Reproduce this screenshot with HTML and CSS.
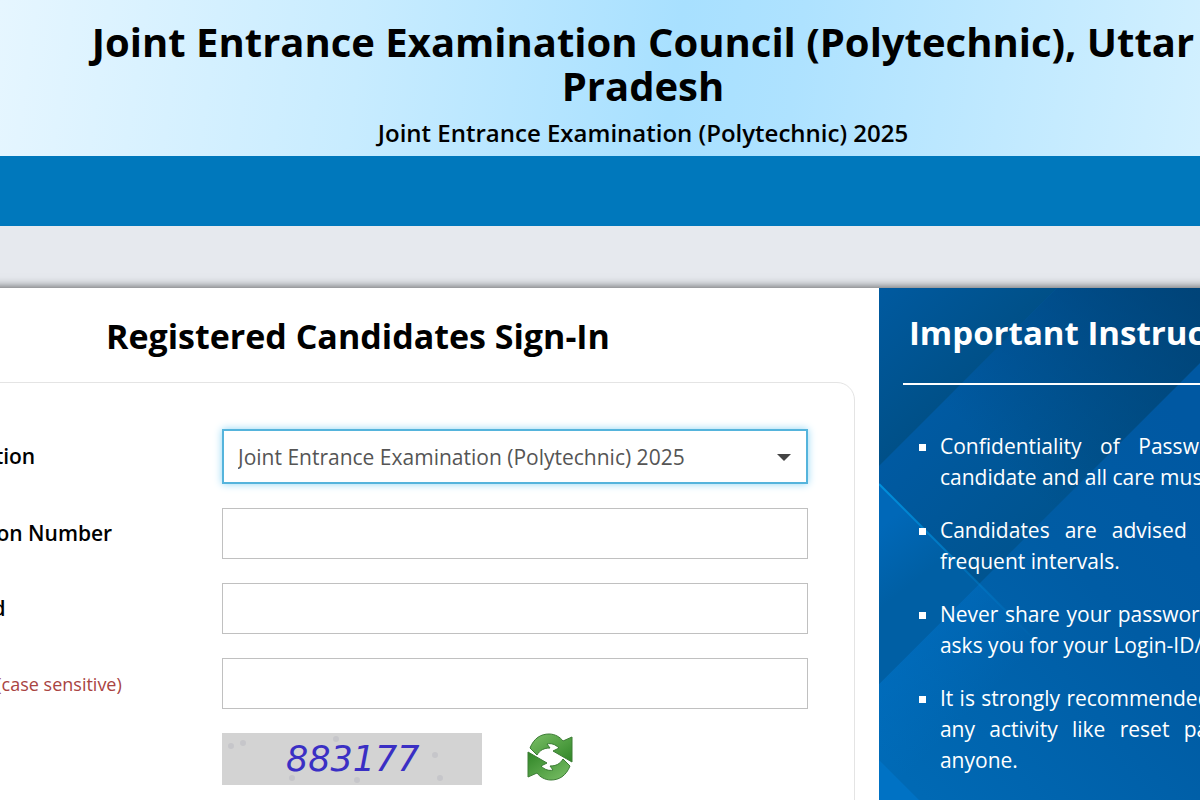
FILE: index.html
```html
<!DOCTYPE html>
<html lang="en">
<head>
    <meta charset="UTF-8">
    <meta name="viewport" content="width=device-width, initial-scale=1.0">
    <title>Joint Entrance Examination Council (Polytechnic), Uttar Pradesh</title>
    <link rel="stylesheet" href="styles.css">
</head>
<body>
    <header class="header">
        <h1>Joint Entrance Examination Council (Polytechnic), Uttar Pradesh</h1>
        <p>Joint Entrance Examination (Polytechnic) 2025</p>
    </header>
    <nav class="navbar"></nav>

    <main class="main">
        <section class="signin">
            <h2>Registered Candidates Sign-In</h2>
            <form class="card">
                <label for="exam">Examination</label>
                <div class="select-box">
                    <select id="exam">
                        <option>Joint Entrance Examination (Polytechnic) 2025</option>
                    </select>
                </div>

                <label for="appNo">Application Number</label>
                <input type="text" id="appNo">

                <label for="password">Password</label>
                <input type="password" id="password">

                <label for="captcha">Captcha <small>(case sensitive)</small></label>
                <input type="text" id="captcha">

                <div class="captcha-row">
                    <svg class="captcha" viewBox="0 0 260 52" role="img" aria-label="Captcha">
                        <rect width="260" height="52" fill="#d3d3d3"/>
                        <g fill="#c6c6ca">
                            <circle cx="9" cy="13" r="3"/>
                            <circle cx="21" cy="10" r="3"/>
                            <circle cx="114" cy="6" r="3"/>
                            <circle cx="213" cy="22" r="3"/>
                            <circle cx="70" cy="45" r="3"/>
                            <circle cx="135" cy="47" r="3"/>
                            <circle cx="218" cy="45" r="3"/>
                        </g>
                        <text x="64" y="38">883177</text>
                    </svg>
                    <button type="button" class="refresh" aria-label="Refresh">
                        <svg viewBox="0 0 48 48">
                            <defs>
                                <linearGradient id="green" x1="0" y1="0" x2="1" y2="1">
                                    <stop offset="0" stop-color="#7cc068"/>
                                    <stop offset="1" stop-color="#2f8526"/>
                                </linearGradient>
                            </defs>
                            <g fill="url(#green)" stroke="#3c7c35" stroke-width="1">
                                <path id="arrow" d="M4 15C8 5 15 1 23 1c6 0 11 3 14 7l9-4v25L27 18l6-3c-4-4-8-5-12-4l3 4c-6 0-10 2-13 7z"/>
                                <use href="#arrow" transform="rotate(180 24 24)"/>
                            </g>
                        </svg>
                    </button>
                </div>
            </form>
        </section>

        <aside class="instructions">
            <svg class="backdrop" aria-hidden="true">
                <defs>
                    <linearGradient id="base" gradientUnits="userSpaceOnUse" x1="0" y1="460" x2="330" y2="160">
                        <stop offset="0" stop-color="#0069b4"/>
                        <stop offset="0.6" stop-color="#005ca4"/>
                        <stop offset="1" stop-color="#0058a2"/>
                    </linearGradient>
                    <linearGradient id="band1" gradientUnits="userSpaceOnUse" x1="0" y1="0" x2="89" y2="89">
                        <stop offset="0" stop-color="#005aa0"/>
                        <stop offset="1" stop-color="#005088"/>
                    </linearGradient>
                    <linearGradient id="band2" gradientUnits="userSpaceOnUse" x1="89" y1="89" x2="198" y2="198">
                        <stop offset="0" stop-color="#005aa2"/>
                        <stop offset="1" stop-color="#005490"/>
                    </linearGradient>
                    <linearGradient id="shade" gradientUnits="userSpaceOnUse" x1="150" y1="200" x2="330" y2="20">
                        <stop offset="0" stop-color="#003c6c" stop-opacity="0"/>
                        <stop offset="1" stop-color="#003c6c" stop-opacity="0.7"/>
                    </linearGradient>
                    <linearGradient id="wedge" gradientUnits="userSpaceOnUse" x1="0" y1="240" x2="40" y2="290">
                        <stop offset="0" stop-color="#0068b8"/>
                        <stop offset="1" stop-color="#005fa4"/>
                    </linearGradient>
                    <linearGradient id="glow" gradientUnits="userSpaceOnUse" x1="50" y1="345" x2="110" y2="405">
                        <stop offset="0" stop-color="#0072c8" stop-opacity="0.4"/>
                        <stop offset="1" stop-color="#0072c8" stop-opacity="0"/>
                    </linearGradient>
                    <linearGradient id="ray" gradientUnits="userSpaceOnUse" x1="0" y1="196" x2="160" y2="356">
                        <stop offset="0" stop-color="#0090dc"/>
                        <stop offset="1" stop-color="#0080d0" stop-opacity="0"/>
                    </linearGradient>
                </defs>
                <rect width="100%" height="100%" fill="url(#base)"/>
                <path d="M178 0H396L0 396V178z" fill="url(#band2)"/>
                <path d="M178 0H396L100 296 0 196V178z" fill="url(#shade)"/>
                <path d="M0 0H178L0 178z" fill="url(#band1)"/>
                <path d="M0 196L100 296 0 396z" fill="url(#wedge)"/>
                <path d="M100 296L240 436 0 676V396z" fill="url(#glow)"/>
                <path d="M0 472L90 562H0z" fill="#0072c4"/>
                <path d="M0 196L160 356" stroke="url(#ray)" stroke-width="2"/>
            </svg>
            <h2>Important Instructions</h2>
            <ul>
                <li>Confidentiality of Password is solely responsibility of the candidate and all care must be taken to protect the password.</li>
                <li>Candidates are advised to keep changing the Password at frequent intervals.</li>
                <li>Never share your password and do not respond to any mail that asks you for your Login-ID/Password.</li>
                <li>It is strongly recommended never to share the OTPs received for any activity like reset password, registration form etc. with anyone.</li>
            </ul>
        </aside>
    </main>
</body>
</html>
```

FILE: styles.css
```css
* {
    box-sizing: border-box;
}
body {
    margin: 0;
    background-color: #e6e9ee;
    color: #000;
    font-family: "Open Sans", sans-serif;
    font-size: 21px;
    overflow: hidden;
}
.header {
    padding: 20px 0 6px 86px;
    text-align: center;
    background: linear-gradient(98deg, #e6f6ff 0%, #c8ecff 30%, #a8e0ff 56%, #aee2ff 66%, #d2f0ff 100%);
}
.header h1 {
    margin: 0;
    font-size: 40px;
    font-weight: 700;
    line-height: 44px;
}
.header p {
    margin: 8px 0 0;
    font-size: 24px;
    font-weight: 600;
    line-height: 34px;
}
.navbar {
    height: 70px;
    background-color: #0078bc;
}
.main {
    display: grid;
    grid-template-columns: 59fr 41fr;
    margin: 62px -403px 0 -163px;
    background-color: #fff;
    box-shadow: 0 0 10px rgba(0, 0, 0, 0.7);
}
.signin {
    padding: 24px;
}
.signin h2 {
    margin: 0 0 22px;
    font-size: 34px;
    font-weight: 700;
    line-height: 48px;
    text-align: center;
}
.card {
    display: grid;
    grid-template-columns: 314px 1fr;
    row-gap: 24px;
    align-items: center;
    padding: 46px;
    border: 1px solid #e4e4e4;
    border-radius: 18px;
}
label {
    padding-bottom: 2px;
    font-weight: 600;
}
label small {
    color: #a94442;
    font-size: 18px;
    font-weight: 400;
}
input,
select {
    display: block;
    width: 100%;
    height: 51px;
    padding: 0 14px;
    border: 1px solid #c0c0c0;
    border-radius: 0;
    background-color: #fff;
    color: #555;
    font: inherit;
}
.select-box {
    position: relative;
}
.select-box::after {
    content: "";
    position: absolute;
    top: 25px;
    right: 17px;
    border: 7px solid transparent;
    border-top-color: #444;
    border-bottom: 0;
    pointer-events: none;
}
select {
    appearance: none;
    height: 55px;
    border: 2px solid #55b4dc;
    box-shadow: 0 0 8px #8fd6f5;
}
.captcha-row {
    display: flex;
    grid-column: 2;
    align-items: flex-start;
    gap: 44px;
}
.captcha {
    width: 260px;
}
.captcha text {
    fill: #3a2fc4;
    font: oblique 35px "DejaVu Sans", sans-serif;
}
.refresh {
    width: 48px;
    height: 48px;
    padding: 0;
    border: none;
    background: none;
    cursor: pointer;
}
.instructions {
    position: relative;
    padding: 21px 24px;
    color: #fff;
}
.backdrop {
    position: absolute;
    top: 0;
    left: 0;
    width: 100%;
    height: 100%;
}
.instructions h2 {
    position: relative;
    margin: 0;
    padding: 0 6px 26px;
    border-bottom: 2px solid #fff;
    font-size: 33px;
    font-weight: 700;
    line-height: 48px;
}
.instructions ul {
    position: relative;
    margin: 46px 0 0;
    padding: 0 0 0 37px;
    list-style: square;
    text-align: justify;
}
.instructions li {
    margin-bottom: 22px;
    line-height: 31px;
}
```
